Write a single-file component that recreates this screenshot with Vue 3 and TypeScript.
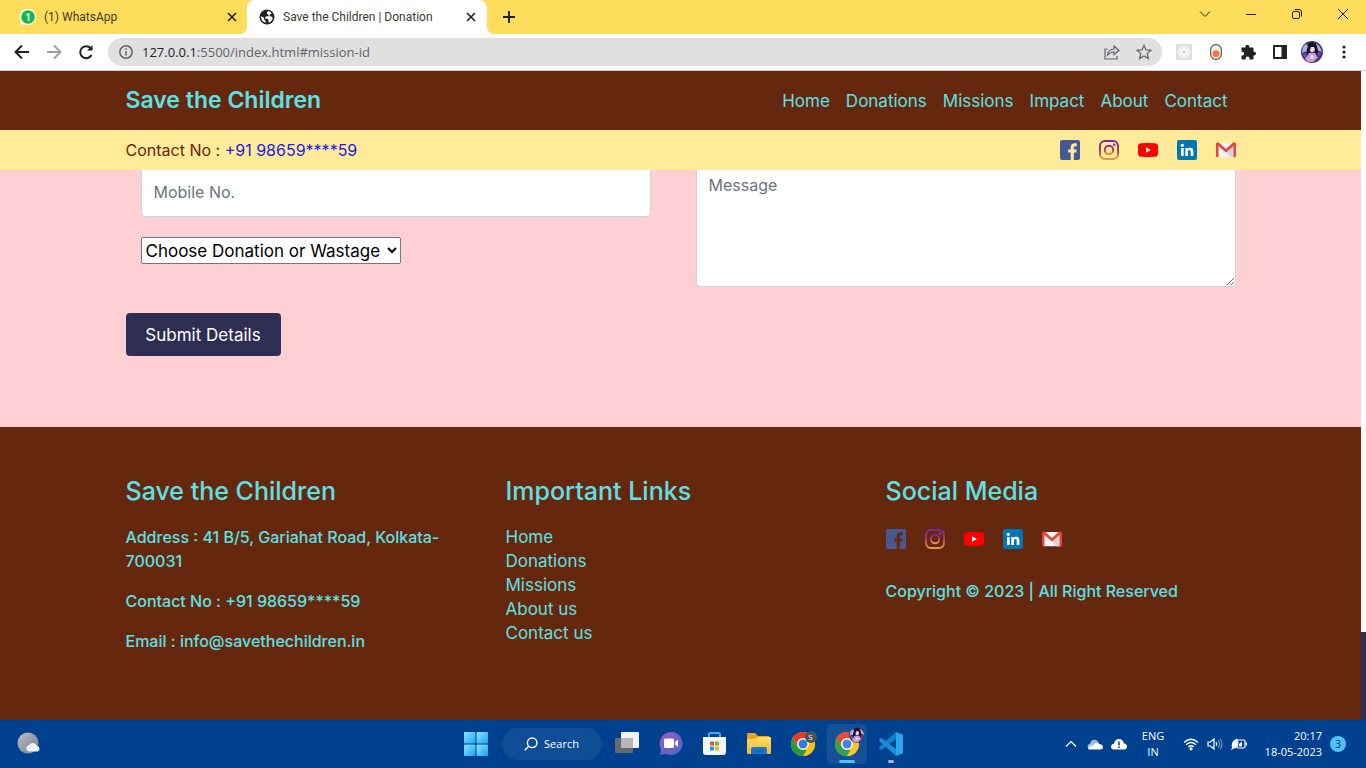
<script setup lang="ts">
import { ref } from 'vue'

interface Link {
  label: string
  href: string
}

const navLinks: Link[] = [
  { label: 'Home', href: '#home' },
  { label: 'Donations', href: '#donations' },
  { label: 'Missions', href: '#mission-id' },
  { label: 'Impact', href: '#impact' },
  { label: 'About', href: '#about' },
  { label: 'Contact', href: '#contact' },
]

const footerLinks: Link[] = [
  { label: 'Home', href: '#home' },
  { label: 'Donations', href: '#donations' },
  { label: 'Missions', href: '#mission-id' },
  { label: 'About us', href: '#about' },
  { label: 'Contact us', href: '#contact' },
]

const socials: string[] = ['facebook', 'instagram', 'youtube', 'linkedin', 'gmail']

const mobile = ref('')
const message = ref('')
const donation = ref('choose')
</script>

<template>
  <div class="desktop">
    <svg class="sprite" aria-hidden="true">
      <defs>
        <linearGradient id="insta" x1="0" y1="0" x2="0" y2="1">
          <stop offset="0" stop-color="#7a2a9c" />
          <stop offset="0.5" stop-color="#b8375f" />
          <stop offset="1" stop-color="#e39a45" />
        </linearGradient>
        <linearGradient id="tile" x1="0" y1="0" x2="1" y2="1">
          <stop offset="0" stop-color="#8be4ff" />
          <stop offset="1" stop-color="#1ba4f3" />
        </linearGradient>
        <linearGradient id="chat" x1="0" y1="0" x2="1" y2="1">
          <stop offset="0" stop-color="#9a5cc0" />
          <stop offset="1" stop-color="#4a66c8" />
        </linearGradient>
        <linearGradient id="folder" x1="0" y1="0" x2="0" y2="1">
          <stop offset="0" stop-color="#ffdc63" />
          <stop offset="1" stop-color="#f5b82e" />
        </linearGradient>
        <linearGradient id="moon" x1="0" y1="0" x2="1" y2="1">
          <stop offset="0" stop-color="#b6bcc4" />
          <stop offset="1" stop-color="#77808c" />
        </linearGradient>
      </defs>
      <symbol id="s-facebook" viewBox="0 0 20 20">
        <path fill="#475993" fill-rule="evenodd" d="M2 0h16a2 2 0 0 1 2 2v16a2 2 0 0 1-2 2h-4.200v-7.600h2.500l.4-3h-2.900V7.600c0-.9.4-1.400 1.500-1.400h1.500V3.500c-.5-.1-1.300-.2-2.200-.2-2.300 0-3.900 1.300-3.900 3.900v2.200H8.100v3h2.600V20H2a2 2 0 0 1-2-2V2a2 2 0 0 1 2-2z" />
      </symbol>
      <symbol id="s-instagram" viewBox="0 0 20 20">
        <rect x="1" y="1" width="18" height="18" rx="5" fill="none" stroke="url(#insta)" stroke-width="2" />
        <circle cx="10" cy="10" r="4.200" fill="none" stroke="url(#insta)" stroke-width="2" />
        <circle cx="15.200" cy="4.800" r="1.300" fill="#8b2c91" />
      </symbol>
      <symbol id="s-youtube" viewBox="0 0 20 20">
        <path fill="#f00" d="M3 3.300Q10 2.700 17 3.300q3 .2 3 3.200v7q0 3-3 3.200-7 .6-14 0-3-.2-3-3.200v-7q0-3 3-3.200z" />
        <path fill="#fff" d="M8 7.200v5.600l4.800-2.800z" />
      </symbol>
      <symbol id="s-linkedin" viewBox="0 0 20 20">
        <rect width="20" height="20" rx="2" fill="#0077b5" />
        <circle cx="5.300" cy="5.300" r="1.600" fill="#fff" />
        <path fill="#fff" d="M4 8h2.700v8H4zM8.300 8h2.500v1.100c.5-.8 1.400-1.300 2.500-1.300 2.300 0 3.100 1.500 3.100 3.700V16h-2.700v-4c0-1.200-.3-1.900-1.300-1.900-1 0-1.500.7-1.500 1.900v4H8.300z" />
      </symbol>
      <symbol id="s-gmail" viewBox="0 0 20 20">
        <path fill="#f2f2f2" d="M2.500 3h15L19 17.300H1z" />
        <path fill="#d5d5d9" d="M10 11.500 17.500 5v12.300H14z" />
        <path fill="#e0463e" d="M1.300 2.500H2.800L10 9l7.200-6.500h1.500q1.300.2 1.300 1.600v11.800q0 1.400-1.200 1.400h-1.300V6L10 12.500 2.500 6v11.300H1.200Q0 17.300 0 15.900V4.100q0-1.400 1.300-1.600z" />
      </symbol>
      <symbol id="chrome-logo" viewBox="0 0 24 24">
        <circle cx="12" cy="12" r="12" fill="#fbc116" />
        <path fill="#e33b2e" d="M1.600 6A12 12 0 0 1 22.400 6H12a6 6 0 0 0-5.200 9z" />
        <path fill="#249a41" d="M1.600 6 6.800 15A6 6 0 0 0 12 18h5.200L12 24A12 12 0 0 1 1.600 6z" />
        <path fill="#fbc116" d="M22.400 6H12a6 6 0 0 1 5.200 9L12 24A12 12 0 0 0 22.400 6z" />
        <circle cx="12" cy="12" r="5.800" fill="#fff" />
        <circle cx="12" cy="12" r="4.500" fill="#3478e5" />
      </symbol>
      <symbol id="portrait" viewBox="0 0 22 22">
        <circle cx="11" cy="11" r="11" fill="#46386f" />
        <path fill="#19132d" d="M7 3q4-4 8 0 3 5 2 11l-3-2V8l-5-1-1 6-4 3z" />
        <path fill="#a9b8e6" d="M2 6l3-3 2 2-2 5-4 2zM15 2l4 4 2 5-4-2z" />
        <path fill="#f0d8e8" d="M10 6h3l1 3-2 2h-2l-1-2z" />
        <path fill="#c89ad6" d="M8 12l6 0 3 5-5 4H7l-3-3z" />
        <path fill="#6c4ac0" d="M2 13l4-1-1 5-2-1zM16 12l4-1-2 5z" />
        <path fill="#eee7fa" d="M10 14l3 1-1 3-3-1zM4 9l2 1-1 1zM17 8l2 1-1 1z" />
      </symbol>
    </svg>

    <header class="browser">
      <div class="tabs">
        <div class="tab">
          <svg class="fav" viewBox="0 0 16 16"><path fill="#fff" d="M8 0a8 8 0 1 1-4 15L0 16l1-4A8 8 0 0 1 8 0z" /><circle cx="8" cy="8" r="6.800" fill="#12b84f" /><text x="8" y="11.500" text-anchor="middle" fill="#fff" font-size="10" font-weight="700">1</text></svg>
          <span class="tab-title">(1) WhatsApp</span>
          <button class="plain close" aria-label="Close tab"><svg viewBox="0 0 10 10"><path d="M1 1l8 8M9 1 1 9" /></svg></button>
        </div>
        <div class="tab active">
          <svg class="fav" viewBox="0 0 16 16"><circle cx="8" cy="8" r="7.500" fill="#202124" /><path fill="#fff" d="M9.500 2 8 3.200v1.600l1.500 1 .2 1.400H7.500L6 8.500l.3 1.300h2.200l1 1v2.700q3.500-.8 4.300-4.300l-1.300-1.700-2-.3.300-1.600 1.900-.8Q11.700 2.700 9.500 2zM2 7q-.3 5 4.300 6.800l.5-1.600-1.600-1.700-.4-1.700z" /></svg>
          <span class="tab-title">Save the Children | Donation</span>
          <button class="plain close" aria-label="Close tab"><svg viewBox="0 0 10 10"><path d="M1 1l8 8M9 1 1 9" /></svg></button>
        </div>
        <button class="plain new-tab" aria-label="New tab"><svg viewBox="0 0 12 12"><path d="M6 0v12M0 6h12" /></svg></button>
        <div class="window-controls">
          <button class="plain" aria-label="Search tabs"><svg viewBox="0 0 12 12"><path d="M1 3.500l5 5 5-5" /></svg></button>
          <button class="plain" aria-label="Minimize"><svg viewBox="0 0 12 12"><path d="M1 6.500h10" /></svg></button>
          <button class="plain" aria-label="Restore"><svg viewBox="0 0 12 12"><rect x="1.500" y="3.500" width="7" height="7" rx="1.500" /><path d="M3.500 1.500H8A2.500 2.500 0 0 1 10.500 4v4.500" /></svg></button>
          <button class="plain" aria-label="Close"><svg viewBox="0 0 12 12"><path d="M1 1l10 10M11 1 1 11" /></svg></button>
        </div>
      </div>
      <div class="toolbar">
        <button class="plain tool" aria-label="Back"><svg viewBox="0 0 16 16" class="line"><path d="M15 8H2M8 1.500 1.500 8 8 14.500" /></svg></button>
        <button class="plain tool faded" aria-label="Forward"><svg viewBox="0 0 16 16" class="line"><path d="M1 8h13M8 1.500 14.500 8 8 14.500" /></svg></button>
        <button class="plain tool" aria-label="Reload"><svg viewBox="0 0 16 16" class="line"><path d="M13.500 11A6 6 0 1 1 12.500 4L14 5.500" /><path d="M14.500 1v5.500H9z" fill="currentColor" stroke="none" /></svg></button>
        <div class="omnibox">
          <svg class="info" viewBox="0 0 14 14"><circle cx="7" cy="7" r="6.200" /><path d="M7 6v4.500M7 3.300v1.500" /></svg>
          <a class="url" href="#mission-id"><b>127.0.0.1</b>:5500/index.html#mission-id</a>
          <button class="plain tool grey" aria-label="Share"><svg viewBox="0 0 16 16" class="thin"><path d="M3.500 5H1v10h12v-3M10 2l5 4.500-5 4V8q-4 0-6.500 3Q4 5.500 10 5z" /></svg></button>
          <button class="plain tool grey" aria-label="Bookmark"><svg viewBox="0 0 16 16" class="thin"><path d="M8 1.300l2 4.600 5 .4-3.800 3.300 1.200 4.900L8 11.900l-4.400 2.600 1.200-4.900L1 6.300l5-.4z" /></svg></button>
        </div>
        <button class="plain tool" aria-label="React tools"><svg viewBox="0 0 16 16"><rect width="16" height="16" fill="#dedede" /><g fill="none" stroke="#fff"><ellipse cx="8" cy="8" rx="6.500" ry="2.500" /><ellipse cx="8" cy="8" rx="6.500" ry="2.500" transform="rotate(60 8 8)" /><ellipse cx="8" cy="8" rx="6.500" ry="2.500" transform="rotate(120 8 8)" /></g></svg></button>
        <button class="plain tool" aria-label="Extension"><svg viewBox="0 0 16 16"><rect x="2.700" y=".7" width="10.600" height="14.600" rx="5" fill="#f3f3f3" stroke="#555" stroke-width="1.200" /><circle cx="8" cy="9.700" r="3.500" fill="#ee7b36" /></svg></button>
        <button class="plain tool" aria-label="Extensions"><svg viewBox="0 0 16 16"><path fill="#202124" d="M1.500 3.500h4V2.700a1.900 1.900 0 0 1 3.800 0v.8h3.500q.7 0 .7.700v3.500h.6a1.900 1.900 0 0 1 0 3.800h-.6v3.300q0 .7-.7.700H9.500v-1a1.900 1.900 0 0 0-3.800 0v1H2.200q-.7 0-.7-.7v-3.300h.8a1.900 1.900 0 0 0 0-3.800h-.8z" /></svg></button>
        <button class="plain tool" aria-label="Side panel"><svg viewBox="0 0 16 16"><path fill="#202124" fill-rule="evenodd" d="M1 1h14v14H1zM3 3h6.500v10H3z" /></svg></button>
        <button class="plain tool profile" aria-label="Profile"><svg><use href="#portrait" /></svg></button>
        <button class="plain tool" aria-label="Menu"><svg viewBox="0 0 16 16" fill="#202124"><circle cx="8" cy="3" r="1.600" /><circle cx="8" cy="8" r="1.600" /><circle cx="8" cy="13" r="1.600" /></svg></button>
      </div>
    </header>

    <div class="viewport">
      <div class="page">
        <div class="masthead">
          <div class="container bar">
            <a class="brand" href="#home">Save the Children</a>
            <nav class="nav">
              <a v-for="link in navLinks" :key="link.label" :href="link.href">{{ link.label }}</a>
            </nav>
          </div>
        </div>
        <div class="contact-bar">
          <div class="container bar">
            <p>Contact No : <a href="tel:+9198659">+91 98659****59</a></p>
            <div class="socials">
              <a v-for="name in socials" :key="name" :href="`#${name}`" :aria-label="name"><svg><use :href="`#s-${name}`" /></svg></a>
            </div>
          </div>
        </div>

        <main class="form-section">
          <form class="container" @submit.prevent>
            <div class="form-row">
              <div class="left">
                <input v-model="mobile" class="field mobile" type="tel" placeholder="Mobile No." aria-label="Mobile No." />
                <select v-model="donation" aria-label="Choose Donation or Wastage">
                  <option value="choose">Choose Donation or Wastage</option>
                </select>
              </div>
              <textarea v-model="message" class="field message" placeholder="Message" aria-label="Message"></textarea>
            </div>
            <button class="submit" type="submit">Submit Details</button>
          </form>
        </main>

        <footer class="footer">
          <div class="container footer-grid">
            <section>
              <h2>Save the Children</h2>
              <p>Address : 41 B/5, Gariahat Road, Kolkata-700031</p>
              <p>Contact No : +91 98659****59</p>
              <p>Email : info@savethechildren.in</p>
            </section>
            <section>
              <h2>Important Links</h2>
              <ul>
                <li v-for="link in footerLinks" :key="link.label"><a :href="link.href">{{ link.label }}</a></li>
              </ul>
            </section>
            <section>
              <h2>Social Media</h2>
              <div class="socials footer-socials">
                <a v-for="name in socials" :key="name" :href="`#${name}`" :aria-label="name"><svg><use :href="`#s-${name}`" /></svg></a>
              </div>
              <p>Copyright © 2023 | All Right Reserved</p>
            </section>
          </div>
        </footer>
      </div>
      <div class="scroll-track"><div class="scroll-thumb"></div></div>
    </div>

    <div class="taskbar">
      <button class="plain weather" aria-label="Weather">
        <svg viewBox="0 0 24 24"><circle cx="11" cy="11" r="10.500" fill="url(#moon)" /><path fill="#f0f2f6" d="M12 19.500a3.300 3.300 0 0 1 .3-6.500 4.300 4.300 0 0 1 7.700 1 2.800 2.800 0 0 1 .5 5.500z" /></svg>
      </button>
      <div class="apps">
        <button class="plain app" aria-label="Start"><svg viewBox="0 0 24 24" fill="url(#tile)"><rect x="0" y="0" width="11.500" height="11.500" rx="1" /><rect x="12.500" y="0" width="11.500" height="11.500" rx="1" /><rect x="0" y="12.500" width="11.500" height="11.500" rx="1" /><rect x="12.500" y="12.500" width="11.500" height="11.500" rx="1" /></svg></button>
        <button class="plain search"><svg viewBox="0 0 14 14"><circle cx="8.200" cy="5.800" r="4.800" /><path d="M4.800 9.200.7 13.300" /></svg>Search</button>
        <button class="plain app" aria-label="Task view"><svg viewBox="0 0 24 24"><rect x="6" y="0" width="18" height="16" rx="1" fill="#f4f4f4" /><rect x="0" y="6" width="18" height="15" rx="1" fill="#666b70" /><path fill="#b5b7b8" d="M6 6h12v10H6z" /></svg></button>
        <button class="plain app" aria-label="Chat"><svg viewBox="0 0 24 24"><path fill="url(#chat)" d="M12 0a11.500 11.500 0 1 1-5 21.800L1 23l1-6A11.500 11.500 0 0 1 12 0z" /><rect x="5" y="6.500" width="10" height="9.500" rx="1.500" fill="#fff" /><path fill="#fff" d="M16 10l3-2.500v7.500l-3-2.500z" /></svg></button>
        <button class="plain app" aria-label="Store"><svg viewBox="0 0 24 24"><path fill="none" stroke="#31b4f2" stroke-width="2" d="M6 6V2.500Q6 1 7.500 1h8Q17 1 17 2.500V6" /><path fill="#f5f7fa" d="M0 5h23v15q0 3-3 3H3q-3 0-3-3z" /><path fill="#e94f2c" d="M7 9.500h4v4H7z" /><path fill="#79b829" d="M12 9.500h4v4h-4z" /><path fill="#1c9de2" d="M7 14.500h4v4H7z" /><path fill="#f5b61b" d="M12 14.500h4v4h-4z" /></svg></button>
        <button class="plain app" aria-label="Files"><svg viewBox="0 0 24 24"><path fill="#e8a61e" d="M1 1h7l3 3h11v5H0V2q0-1 1-1z" /><path fill="url(#folder)" d="M0 7h8l3-2h12q1 0 1 1v15q0 1-1 1H1q-1 0-1-1z" /><path fill="#1578c8" d="M4 22v-5q0-2 2-2h12q2 0 2 2v5z" /><path fill="#1062a6" d="M8 18.500h8V20H8z" /></svg></button>
        <button class="plain app" aria-label="Chrome"><svg><use href="#chrome-logo" /></svg><span class="badge letter">S</span></button>
        <button class="plain app current" aria-label="Chrome, active"><svg><use href="#chrome-logo" /></svg><svg class="badge"><use href="#portrait" /></svg></button>
        <button class="plain app running" aria-label="Code editor"><svg viewBox="0 0 24 24"><path fill="#0b83cc" d="M17 0v7L3 17.500q-1 .5-1.600 0L.3 16.300q-.6-.8 0-1.400z" /><path fill="#168fd8" d="M17 24v-7L3 6.500q-1-.5-1.600 0L.3 7.700q-.6.800 0 1.400z" /><path fill="#29a6ef" d="M17 0l6.300 2.600q.7.300.7 1.100v16.600q0 .8-.7 1.100L17 24z" /></svg></button>
      </div>
      <div class="tray">
        <button class="plain" aria-label="Hidden icons"><svg class="stroke w12" viewBox="0 0 12 12"><path d="M1 8.500 6 3.500l5 5" /></svg></button>
        <svg class="w16" viewBox="0 0 16 16"><path fill="#9db8db" d="M1 12Q-.5 9 3 7.500 4.500 2.500 9 4q2 .5 3 3.500L6 12z" /><path fill="#fff" d="M1 12.500q1.500-3 5-3Q9 5.500 12.500 8q3.500.5 3.500 3 0 2.500-3 2.500H3q-2 0-2-1z" /></svg>
        <svg class="w16" viewBox="0 0 16 16"><path fill="#fff" d="M3 13.500q-3 0-3-3Q.3 8 3 7.500 4 3 8 3q4 0 5 4.500 3 .3 3 3 0 3-3 3z" /><path stroke="#00418f" stroke-width="1.500" d="M8 5.500v4M8 10.500v1.500" /></svg>
        <span class="language">ENG<br />IN</span>
        <svg class="stroke w16" viewBox="0 0 16 16"><path d="M1 6.500q7-6.500 14 0M3 8.800q5-4.600 10 0M5.200 11q2.800-2.500 5.600 0" /><circle cx="8" cy="12.800" r="1" fill="#fff" /></svg>
        <svg class="stroke w16" viewBox="0 0 16 16"><path d="M1 6h2.500L7 3v10l-3.500-3H1zM9 6q1.500 2 0 4" /><path opacity=".45" d="M11 4.500q3 3.500 0 7M13 3q4 5 0 10" /></svg>
        <svg class="stroke w16 battery" viewBox="0 0 16 16"><path d="M6 4h6.500Q14 4 14 5.500v5q0 1.500-1.500 1.500H6M15.500 6.500v3" /><path fill="#fff" stroke="none" d="M0 14 1 12Q-.5 5 6 2.500L7.500 6 7 10.500Q5 13 2 12.500L1 14zM8 10.500V8l3-2.500v5z" /></svg>
        <span class="clock">20:17<br />18-05-2023</span>
        <span class="count">3</span>
      </div>
    </div>
  </div>
</template>

<style>
body {
  margin: 0;
}
</style>

<style scoped>
* {
  box-sizing: border-box;
}
.desktop {
  display: flex;
  flex-direction: column;
  min-height: 100vh;
  font-family: "Open Sans", "Noto Sans", sans-serif;
  overflow: hidden;
}
.sprite {
  position: absolute;
  width: 0;
  height: 0;
}
svg {
  display: block;
  flex: none;
}
.plain {
  display: flex;
  align-items: center;
  justify-content: center;
  padding: 0;
  border: 0;
  background: none;
  color: inherit;
  font: inherit;
}
a {
  color: inherit;
  text-decoration: none;
}
p, h2, ul {
  margin: 0;
  padding: 0;
}
li {
  list-style: none;
}

/* browser frame */
.browser {
  background: #fff;
  border-bottom: 1px solid #d8cfcb;
}
.tabs {
  display: flex;
  height: 34px;
  background: #ffdd5c;
  font-family: Roboto, "Open Sans", sans-serif;
  font-size: 12px;
  color: #3c3a30;
}
.tab {
  position: relative;
  display: flex;
  align-items: center;
  gap: 8px;
  width: 247px;
  padding: 0 10px 0 20px;
}
.tab.active {
  width: 240px;
  padding: 0 11px 0 12px;
  background: #fff;
  border-radius: 8px 8px 0 0;
}
.tab.active::before,
.tab.active::after {
  content: "";
  position: absolute;
  bottom: 0;
  width: 8px;
  height: 8px;
}
.tab.active::before {
  right: 100%;
  background: radial-gradient(circle at 0 0, #ffdd5c 8px, #fff 8px);
}
.tab.active::after {
  left: 100%;
  background: radial-gradient(circle at 100% 0, #ffdd5c 8px, #fff 8px);
}
.fav {
  width: 16px;
  height: 16px;
}
.tab-title {
  flex: 1;
  white-space: nowrap;
}
.close svg {
  width: 10px;
  height: 10px;
  fill: none;
  stroke: #202124;
  stroke-width: 1.6;
}
.new-tab {
  width: 44px;
}
.new-tab svg {
  width: 12px;
  height: 12px;
  stroke: #202124;
  stroke-width: 2;
}
.window-controls {
  display: flex;
  height: 28px;
  margin-left: auto;
}
.window-controls button {
  width: 46px;
}
.window-controls svg {
  width: 12px;
  height: 12px;
  fill: none;
  stroke: #202124;
}
.toolbar {
  display: flex;
  align-items: center;
  height: 36px;
  padding: 0 6px;
  color: #202124;
}
.tool {
  width: 32px;
  height: 28px;
}
.tool svg {
  width: 16px;
  height: 16px;
}
.profile svg {
  width: 22px;
  height: 22px;
}
.line {
  fill: none;
  stroke: currentColor;
  stroke-width: 2;
}
.thin {
  fill: none;
  stroke: currentColor;
  stroke-width: 1.2;
}
.faded {
  color: #a0a0a0;
}
.grey {
  color: #5f6368;
}
.omnibox {
  display: flex;
  align-items: center;
  flex: 1;
  height: 28px;
  margin: 0 6px;
  padding: 0 2px 0 11px;
  border-radius: 14px;
  background: #e0e0e0;
  font-size: 13px;
}
.info {
  width: 14px;
  height: 14px;
  margin-right: 9px;
  fill: none;
  stroke: #5f6368;
  stroke-width: 1.5;
}
.url {
  flex: 1;
  color: #5f6368;
}
.url b {
  color: #202124;
  font-weight: 400;
}

/* web page */
.viewport {
  display: flex;
  flex: 1;
  font-family: Inter, sans-serif;
  font-size: 16px;
  line-height: 24px;
}
.page {
  display: flex;
  flex-direction: column;
  flex: 1;
}
.container {
  width: 100%;
  max-width: 1140px;
  margin: 0 auto;
  padding: 0 15px;
}
.bar {
  display: flex;
  align-items: center;
  justify-content: space-between;
}
.masthead {
  padding: 14px 0;
  background: #65280e;
  color: #5ce1e6;
}
.brand {
  font-size: 23px;
  line-height: 31px;
  font-weight: 600;
}
.nav {
  display: flex;
  gap: 16px;
  padding-right: 8px;
  font-size: 17px;
}
.contact-bar {
  padding: 8px 0;
  background: #ffeb99;
  color: #65280e;
}
.contact-bar p a {
  color: #2020e0;
}
.socials {
  display: flex;
  gap: 19px;
}
.socials svg {
  width: 20px;
  height: 20px;
}
.form-section {
  padding-bottom: 71px;
  overflow: hidden;
  background: #ffd0d3;
}
.form-row {
  display: grid;
  grid-template-columns: 1fr 1fr;
  gap: 30px;
}
.left {
  display: flex;
  flex-direction: column;
  align-items: flex-start;
  gap: 20px;
  padding: 0 15px;
}
.field {
  display: block;
  width: 100%;
  padding: 6px 12px;
  border: 1px solid #ced4da;
  border-radius: 4px;
  background: #fff;
  color: #495057;
  font: inherit;
}
.field::placeholder {
  color: #6c757d;
  opacity: 1;
}
.mobile {
  height: 52px;
  margin-top: -5px;
  padding-bottom: 4px;
}
.message {
  height: 121px;
  margin-top: -4px;
}
select {
  width: 260px;
  height: 27px;
  padding: 0;
  border: 1px solid #767676;
  border-radius: 2px;
  background: #fff;
  color: #000;
  font: inherit;
  font-size: 17px;
}
.submit {
  display: block;
  width: 155px;
  height: 43px;
  margin-top: 26px;
  border: 0;
  border-radius: 4px;
  background: #2e2e54;
  color: #fff;
  font: inherit;
  font-size: 17px;
}
.footer {
  flex: 1;
  padding: 48px 0 62px;
  background: #65280e;
  color: #5ce1e6;
}
.footer-grid {
  display: grid;
  grid-template-columns: repeat(3, 1fr);
  gap: 30px;
}
.footer h2 {
  margin-bottom: 18px;
  font-size: 25px;
  line-height: 32px;
  font-weight: 500;
}
.footer p {
  font-weight: 500;
}
.footer p + p {
  margin-top: 16px;
}
.footer li {
  font-size: 17px;
}
.footer-socials {
  padding: 4px 0 30px;
}
.scroll-track {
  display: flex;
  align-items: flex-end;
  width: 5px;
  background: #fff;
}
.scroll-thumb {
  width: 100%;
  height: 88px;
  background: #2e2e54;
}

/* taskbar */
.taskbar {
  display: grid;
  grid-template-columns: 1fr auto 1fr;
  align-items: center;
  height: 48px;
  background: #00418f;
  color: #fff;
  font-size: 12px;
  line-height: 16px;
}
.weather {
  justify-self: start;
  margin-left: 17px;
}
.weather svg {
  width: 24px;
  height: 24px;
}
.apps {
  display: flex;
  align-items: center;
}
.app {
  position: relative;
  width: 44px;
  height: 40px;
}
.app svg {
  width: 24px;
  height: 24px;
}
.app .badge {
  position: absolute;
  top: 3px;
  right: 4px;
  width: 16px;
  height: 16px;
}
.app .letter {
  top: 7px;
  right: 8px;
  width: 12px;
  height: 12px;
  border-radius: 50%;
  background: #4c5256;
  font-size: 8px;
  line-height: 12px;
}
.current::before {
  content: "";
  position: absolute;
  inset: 0 2px;
  border-radius: 4px;
  background: #ffffff14;
}
.current::after,
.running::after {
  content: "";
  position: absolute;
  bottom: 1px;
  width: 16px;
  height: 3px;
  border-radius: 2px;
  background: #4cc2ff;
}
.running::after {
  width: 6px;
  background: #a6b4cb;
}
.search {
  gap: 6px;
  width: 100px;
  height: 32px;
  margin: 0 3px 0 4px;
  border-radius: 16px;
  background: #104d97;
  font-size: 11px;
}
.search svg {
  width: 14px;
  height: 14px;
  fill: none;
  stroke: #fff;
  stroke-width: 1.4;
}
.tray {
  display: flex;
  align-items: center;
  justify-content: flex-end;
  gap: 8px;
  padding-right: 20px;
}
.w12 {
  width: 12px;
  height: 12px;
  margin-right: 2px;
}
.w16 {
  width: 16px;
  height: 16px;
}
.stroke {
  fill: none;
  stroke: #fff;
  stroke-width: 1.2;
}
.language {
  width: 24px;
  margin: 0 10px 0 6px;
  font-size: 11px;
  text-align: center;
}
.battery {
  margin-right: 6px;
}
.clock {
  width: 61px;
  font-size: 11px;
  text-align: right;
  white-space: nowrap;
}
.count {
  width: 16px;
  height: 16px;
  border-radius: 50%;
  background: #4cc2ff;
  color: #10243c;
  font-size: 10px;
  text-align: center;
}
</style>
